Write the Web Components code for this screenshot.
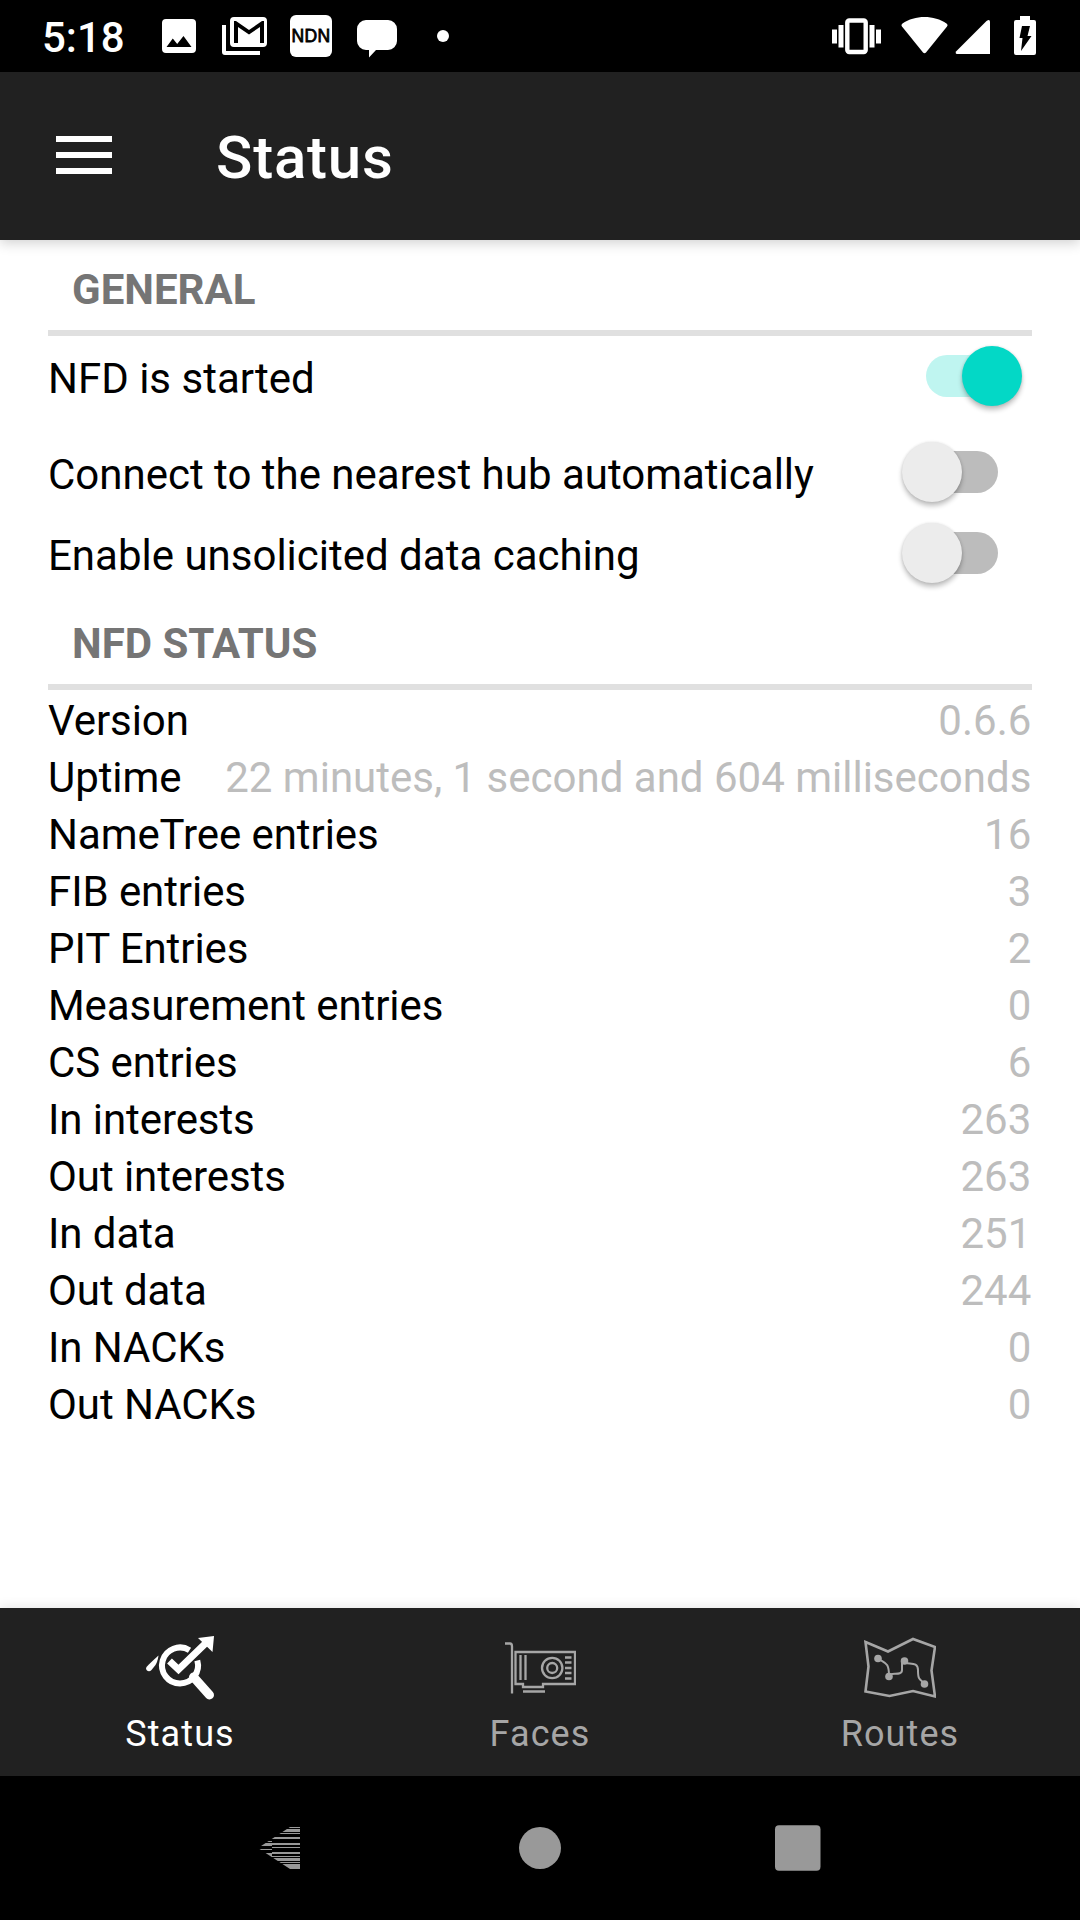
<!DOCTYPE html>
<html lang="en"><head><meta charset="utf-8"><title>NFD Status</title>
<style>html,body{margin:0;background:#fff}body{font-family:Roboto,"Noto Sans",sans-serif}</style></head>
<body>
<nfd-app></nfd-app>
<script>
const define=(name,html,setup)=>customElements.define(name,class extends HTMLElement{
 constructor(){super();const t=document.createElement('template');t.innerHTML=html;this.attachShadow({mode:'open'}).append(t.content.cloneNode(true));}
 connectedCallback(){if(setup)setup(this,this.shadowRoot);}
});

define('status-bar',`<style>
:host{display:flex;height:72px;background:#000;color:#fff;flex:none;overflow:hidden}
svg{display:block;flex:none}
.time{width:122px;box-sizing:border-box;padding-left:42px;font-size:42px;font-weight:500;line-height:76px;white-space:nowrap}
.right{margin-left:auto}
.ndn{flex:none;width:42px;height:42px;margin:15px 0 0 168px;border-radius:6px;background:#fff;color:#000;font:17.5px/43px "Liberation Sans",sans-serif;text-align:center;-webkit-text-stroke:.8px #000;letter-spacing:.3px}
.over{display:flex;width:338px;position:relative}
.over>svg{position:absolute;left:0;top:0}
</style>
<div class="time">5:18</div>
<div class="over"><svg width="338" height="72" viewBox="122 0 338 72" fill="#fff">
<path fill-rule="evenodd" d="M166 19h26a4 4 0 0 1 4 4v26a4 4 0 0 1-4 4h-26a4 4 0 0 1-4-4V23a4 4 0 0 1 4-4zM166.500 47h25l-8-11-6.300 8-4.400-5.500z"/>
<path d="M222 25h4v26h34v4h-35a3 3 0 0 1-3-3z"/>
<path fill-rule="evenodd" d="M234 17h29a4 4 0 0 1 4 4v22a4 4 0 0 1-4 4h-29a4 4 0 0 1-4-4V21a4 4 0 0 1 4-4zM234 21v22h4V27l11 7.500L260 27v16h4V21h-2l-13 9-13-9z"/>
<path d="M366 20h22a9 9 0 0 1 9 9v12a9 9 0 0 1-9 9h-12l-7 7.500V50h-3a9 9 0 0 1-9-9V29a9 9 0 0 1 9-9z"/>
<circle cx="443" cy="36" r="6"/></svg><div class="ndn">NDN</div></div>
<svg class="right" width="260" height="72" viewBox="820 0 260 72" fill="#fff">
<path d="M832 29.500h5v14h-5zM838.500 25h5v22.500h-5zM869.500 25h5v22.500h-5zM876 29.500h5v14h-5z"/>
<rect x="847.300" y="20.500" width="18.400" height="31.500" rx="2" fill="none" stroke="#fff" stroke-width="4.400"/>
<path d="M902.500 23.500c12-8.700 32-8.700 44 0 1.200 1 1.300 2 .5 3l-21 26q-1.500 1.500-3 0l-21-26c-.8-1-.7-2 .5-3z"/>
<path d="M956 51.500 986.500 21q3.500-2.500 3.500 1v32h-33q-2-.5-1-2.500z"/>
<path fill-rule="evenodd" d="M1020 16h10v4h4a2 2 0 0 1 2 2v31a2 2 0 0 1-2 2h-18a2 2 0 0 1-2-2V22a2 2 0 0 1 2-2h4zM1022 26h8l-2.500 10h4l-10.500 15 1.500-13h-3z"/>
</svg>`);

define('app-bar',`<style>
:host{display:flex;align-items:center;height:168px;background:#212121;color:#fff;flex:none;box-shadow:0 3px 12px rgba(0,0,0,.19);position:relative;z-index:1}
svg{margin:0 104px 2px 56px}
.t{font-size:60px;font-weight:500;line-height:72px;padding-top:4px;letter-spacing:.8px}
</style><svg width="56" height="38" viewBox="0 0 56 38" fill="#fff"><path d="M0 0h56v6H0zM0 16h56v6H0zM0 32h56v6H0z"/></svg><div class="t"><slot></slot></div>`);

define('section-title',`<style>
:host{display:block;box-sizing:border-box;border-bottom:6px solid #e0e0e0;padding-left:24px;color:#757575;font-size:42px;font-weight:700;line-height:49px;white-space:nowrap}
</style><slot></slot>`);

define('toggle-row',`<style>
:host{display:flex;justify-content:space-between;font-size:42px;line-height:49px;color:#000;white-space:nowrap}
.track{display:flex;align-items:center;width:72px;height:42px;border-radius:21px;background:#bcbcbc;margin-right:34px;margin-top:1px}
.thumb{flex:none;width:60px;height:60px;border-radius:50%;background:#ececec;margin-left:-24px;box-shadow:0 4px 5px rgba(0,0,0,.24),0 0 3px rgba(0,0,0,.12)}
:host([on]) .track{background:#bff5f0}
:host([on]) .thumb{background:#03d8c6;margin-left:35.500px}
</style><span><slot></slot></span><div class="track"><div class="thumb"></div></div>`);

define('stat-row',`<style>
:host{display:flex;justify-content:space-between;height:57px;font-size:42px;line-height:57px;white-space:nowrap;color:#000}
.label{letter-spacing:-.08px}
.value{color:#bdbdbd;padding-right:.7px}
</style><span class="label"><slot></slot></span><span class="value"></span>`,(h,r)=>{r.querySelector('.value').textContent=h.getAttribute('value');});

define('tab-item',`<style>
:host{display:flex;flex-direction:column;align-items:center;flex:1;color:#a6a6a6;font-size:36px;line-height:42px;letter-spacing:1.1px}
::slotted(svg){display:block;width:72px;height:72px;margin:24px 0 9px}
:host([active]){color:#fff}
</style><slot name="icon"></slot><div><slot></slot></div>`);

define('tab-bar',`<style>
:host{display:flex;height:168px;background:#212121;flex:none;box-shadow:0 0 12px rgba(0,0,0,.12)}
</style>
<tab-item active><svg slot="icon" viewBox="144 1632 72 72" fill="none" stroke="#fff"><path d="M189.500 1650.200A18 18 0 1 0 197.300 1660.500" stroke-width="6"/><path d="M193.500 1677 209.500 1695" stroke-width="9" stroke-linecap="round"/><path d="m169.500 1661 9 8.500L208 1641" stroke-width="7"/><path d="m198 1638 16-2-1.500 16z" fill="#fff" stroke="none"/><path d="M146.500 1667q2-2.500 12-11.500-1 6.500-3 9.500l-4 5q-2.500 2.500-5 0-1-1.500 0-3z" fill="#fff" stroke="none"/></svg>Status</tab-item>
<tab-item><svg slot="icon" viewBox="504 1632 72 72" fill="none" stroke="#a6a6a6" stroke-width="2.300"><path d="M505 1643.500h5q2 0 2 3v47"/><path d="M515.500 1652H575v32h-32v3h-20v-3h-7.500zM520.500 1655v25M525.500 1655v25M523 1691.500h22M565 1657.500h6.500M565 1662.500h6.500M565 1668h6.500M565 1673h6.500M565 1678.500h6.500"/><circle cx="552.200" cy="1668" r="10.200"/><circle cx="552.200" cy="1668" r="5"/></svg>Faces</tab-item>
<tab-item><svg slot="icon" viewBox="864 1632 72 72" fill="none" stroke="#a6a6a6" stroke-width="2.600"><path d="m865.500 1642 22.500 9.500 25-12.500 22 8-3.500 23.500 3.500 26-22-5.500-23.500 5-24-4.500 3-25z"/><path d="M878 1658.500c7 5 11 3 11 17.500 1-5 13 1 13-6v-9c5 5 16-1 16 9 0 11 2 9 7 14" stroke-width="2"/><g fill="#a6a6a6" stroke="none"><circle cx="878" cy="1658.500" r="3.800"/><circle cx="889" cy="1676.500" r="3.800"/><circle cx="904.500" cy="1661" r="3.800"/><circle cx="924.500" cy="1684" r="3.800"/></g></svg>Routes</tab-item>`);

define('nav-bar',`<style>:host{display:block;height:144px;background:#000;flex:none}svg{display:block}</style>
<svg width="1080" height="144" viewBox="0 1776 1080 144" fill="#999"><clipPath id="back"><path d="M258 1848 290 1827H300V1869H290z"/></clipPath><path clip-path="url(#back)" d="M272 1827h28v1h-28zM272 1829h28v3h-28zM272 1833h28v1h-28zM271 1837h29v2h-29zM272 1843h28v2h-28zM272 1847h28v1h-28zM272 1852h28v2h-28zM272 1856h28v1h-28zM272 1858h28v3h-28zM272 1862h28v1h-28zM272 1864h28v5h-28zM256 1841h16v1h-16zM256 1843h16v3h-16zM256 1849h16v1h-16zM256 1853h16v4h-16z"/><circle cx="540" cy="1848" r="21"/><rect x="775" y="1825.300" width="45.500" height="45.400" rx="4"/></svg>`);

define('nfd-app',`<style>
:host{display:flex;flex-direction:column;width:1080px;height:1920px;background:#fff;overflow:hidden}
main{flex:1;display:flex;flex-direction:column;padding:0 48px}
.g{height:96px;padding-top:25px}
.s{height:95px;padding-top:24px;margin-bottom:2px}
.a,.b,.c{height:96px;padding-top:18px;box-sizing:border-box}.b{height:81px}.c{height:82px}
</style>
<status-bar></status-bar><app-bar>Status</app-bar>
<main>
<section-title class="g">GENERAL</section-title>
<toggle-row class="a" on>NFD is started</toggle-row><toggle-row class="b">Connect to the nearest hub automatically</toggle-row><toggle-row class="c">Enable unsolicited data caching</toggle-row>
<section-title class="s">NFD STATUS</section-title>
<stat-row value="0.6.6">Version</stat-row><stat-row value="22 minutes, 1 second and 604 milliseconds">Uptime</stat-row><stat-row value="16">NameTree entries</stat-row><stat-row value="3">FIB entries</stat-row><stat-row value="2">PIT Entries</stat-row><stat-row value="0">Measurement entries</stat-row><stat-row value="6">CS entries</stat-row><stat-row value="263">In interests</stat-row><stat-row value="263">Out interests</stat-row><stat-row value="251">In data</stat-row><stat-row value="244">Out data</stat-row><stat-row value="0">In NACKs</stat-row><stat-row value="0">Out NACKs</stat-row>
</main>
<tab-bar></tab-bar><nav-bar></nav-bar>`);
</script></body></html>
